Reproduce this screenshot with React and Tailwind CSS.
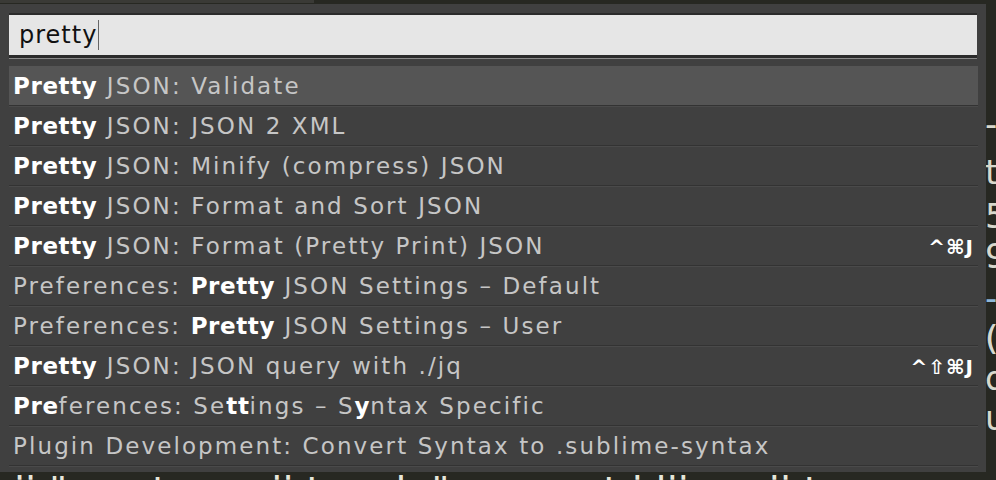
const rows = [
  { parts: [['Pretty', true], [' JSON: Validate', false]], selected: true },
  { parts: [['Pretty', true], [' JSON: JSON 2 XML', false]] },
  { parts: [['Pretty', true], [' JSON: Minify (compress) JSON', false]] },
  { parts: [['Pretty', true], [' JSON: Format and Sort JSON', false]] },
  { parts: [['Pretty', true], [' JSON: Format (Pretty Print) JSON', false]], keys: '^⌘J' },
  { parts: [['Preferences: ', false], ['Pretty', true], [' JSON Settings – Default', false]] },
  { parts: [['Preferences: ', false], ['Pretty', true], [' JSON Settings – User', false]] },
  { parts: [['Pretty', true], [' JSON: JSON query with ./jq', false]], keys: '^⇧⌘J' },
  {
    parts: [
      ['Pre', true], ['ferences: Se', false], ['tt', true], ['ings – S', false], ['y', true], ['ntax Specific', false],
    ],
  },
  { parts: [['Plugin Development: Convert Syntax to .sublime-syntax', false]] },
];

const editorLines = [
  { top: 104, text: '-', color: 'text-[#d8d8cc]' },
  { top: 152, text: 't', color: 'text-[#d8d8cc]' },
  { top: 196, text: '5', color: 'text-[#d8d8cc]' },
  { top: 236, text: '9', color: 'text-[#d8d8cc]' },
  { top: 278, text: '-(', color: 'text-[#8fb8d8]' },
  { top: 318, text: '(', color: 'text-[#d8d8cc]' },
  { top: 358, text: 'd', color: 'text-[#d8d8cc]' },
  { top: 398, text: 'u', color: 'text-[#d8d8cc]' },
];

export default function App() {
  return (
    <div className="relative w-[996px] h-[480px] overflow-hidden bg-[#272822] font-['DejaVu_Sans',sans-serif]">
      <div className="absolute left-0 top-0 h-[3px] w-[314px] bg-[#3a3a36]" />
      {editorLines.map((l) => (
        <div
          key={l.top}
          className={`absolute left-[985px] text-[34px] leading-[40px] ${l.color}`}
          style={{ top: l.top }}
        >
          {l.text}
        </div>
      ))}
      <div className="absolute left-[14px] top-[472px] whitespace-nowrap text-[40px] leading-[40px] text-[#e6e6da]">
        ii " centver : ii toaak " excpect i liier : ii ta
      </div>

      <div className="absolute left-0 top-[4px] w-[986px] h-[468px] bg-[#404040] pt-[9px] pl-[9px] pr-[8px]">
        <div className="h-[45px] bg-[#e6e6e6] border-t-2 border-t-[#2b2b2b] border-b-[3px] border-b-[#2b2b2b] shadow-[0_1px_0_#8a8a8a] flex items-center pl-[10px] mr-[1px]">
          <span className="text-[24px] text-[#111] leading-none tracking-[1px]">pretty</span>
          <span className="w-px h-[30px] bg-[#666] ml-[1px]" />
        </div>
        <div className="mt-[8px]">
          {rows.map((r, i) => (
            <div
              key={i}
              className={`h-[40px] flex items-center justify-between pl-[4px] pr-[4px] pt-[2px] border-b border-b-[#333333] shadow-[0_1px_0_#4a4a4a] ${
                r.selected ? 'bg-[#555555]' : ''
              }`}
            >
              <span className="text-[23px] whitespace-nowrap text-[#c6c6c6] tracking-[2.1px]">
                {r.parts.map(([t, b], j) => (
                  <span key={j} className={b ? 'font-bold text-white tracking-[0.6px]' : ''}>
                    {t}
                  </span>
                ))}
              </span>
              {r.keys && (
                <span className="text-[20px] font-bold text-white tracking-[1px]">{r.keys}</span>
              )}
            </div>
          ))}
        </div>
      </div>
    </div>
  );
}
